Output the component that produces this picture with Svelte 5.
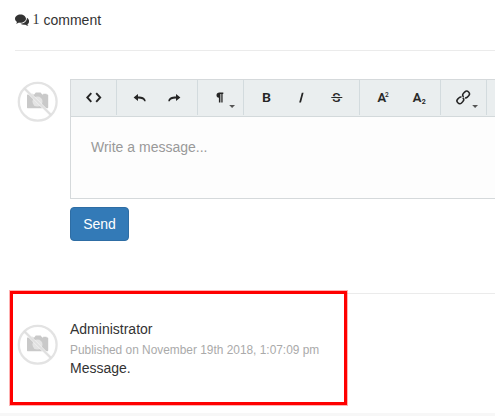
<script>
  const groups = [['code'], ['undo', 'redo'], ['paragraph'], ['bold', 'italic', 'strike'], ['sup', 'sub'], ['link'], ['more']];
</script>

{#snippet avatar()}
  <svg class="avatar" width="45" height="45" viewBox="0 0 45 45">
    <path fill="#c9c9c9" d="M12.300 15.500h2v-.8h3.400v.8h1.500l1.600-2h4.800l1.600 2h1v-.8h3.400v.8h1q.6 0 .6.600V28.600q0 .6-.6.600H12.600q-.6 0-.6-.6V16z" />
    <circle cx="22.500" cy="22.600" r="5" fill="#e4e4e4" />
    <path stroke="#f6f6f6" stroke-width="3" d="M9.500 9.500L36 36" />
    <circle cx="22.700" cy="22.700" r="18.900" fill="none" stroke="#e3e3e3" stroke-width="2.300" />
    <path stroke="#dfdfdf" stroke-width="1.900" d="M9 9L36 36" />
  </svg>
{/snippet}

{#snippet icon(name)}
  <svg class="icon" width="35" height="36" viewBox="0 0 35 36">
    {#if name === 'code'}
      <path class="line" stroke-width="1.900" d="M15.300 13.200L11.300 17.500l4 4.300M20.200 13.200l4 4.300-4 4.300" />
    {:else if name === 'undo'}
      <path d="M11.600 17.500l4.400-3.400v2.500c4.400 0 7.500 1.200 7.700 4.700h-1.500c-.4-2.100-2.500-2.900-6.200-2.900v2.500z" />
    {:else if name === 'redo'}
      <path d="M23.400 17.500L19 14.100v2.500c-4.400 0-7.500 1.200-7.700 4.700h1.500c.4-2.100 2.500-2.900 6.200-2.900v2.500z" />
    {:else if name === 'paragraph'}
      <path d="M20.300 12.500v1.400h-.7v8.600h-1.300v-8.600h-.9v8.600h-1.500v-4.700c-1.600-.3-2.400-1.300-2.400-2.600 0-1.700 1.200-2.700 2.900-2.700z" />
    {:else if name === 'bold'}
      <text x="13" y="22.300" font-size="13.500" font-weight="600" textLength="9" lengthAdjust="spacingAndGlyphs">B</text>
    {:else if name === 'italic'}
      <path d="M17.800 12.700h1.800l-2.600 9.700h-1.800z" />
    {:else if name === 'strike'}
      <text x="13.300" y="22.200" font-size="13.500" font-weight="500">S</text>
      <path fill="#eaeeef" d="M12.300 16.300h11v2.400h-11z" />
      <path d="M12.300 17h11v1h-11z" />
    {:else if name === 'sup'}
      <text x="12.600" y="22.300" font-size="13.500" font-weight="500" stroke="#252525" stroke-width=".2" textLength="8.600" lengthAdjust="spacingAndGlyphs">A</text>
      <text x="20" y="16.800" font-size="6.500" font-weight="500">2</text>
    {:else if name === 'sub'}
      <text x="12.800" y="22.300" font-size="13.500" font-weight="500" stroke="#252525" stroke-width=".2" textLength="8.600" lengthAdjust="spacingAndGlyphs">A</text>
      <text x="21.800" y="23.600" font-size="7" font-weight="700">2</text>
    {:else if name === 'link'}
      <g class="line" stroke-width="1.500" transform="rotate(-45 17.200 17.400)">
        <path d="M16.300 15.900q-.7-1.200-2.200-1.200h-2q-2.500 0-2.500 2.700t2.500 2.700h2q2.600 0 2.600-2.700" />
        <path d="M18.100 18.900q.7 1.200 2.200 1.200h2q2.500 0 2.500-2.700t-2.500-2.700h-2q-2.600 0-2.600 2.700" />
      </g>
    {/if}
    {#if name === 'paragraph' || name === 'link'}
      <path fill="#555" d="M26.200 25h5.800l-2.900 2.900z" />
    {/if}
  </svg>
{/snippet}

<main>
  <header>
    <svg class="chat" width="14" height="14" viewBox="0 0 14 14">
      <path d="M5.500 1.500C2.500 1.500 0 3.400 0 5.800c0 1.300.8 2.400 2 3.200-.2.700-.6 1.200-1.100 1.700 1.200 0 2.200-.5 3-1.100.5.100 1 .2 1.600.2 3 0 5.500-1.700 5.500-4S8.500 1.500 5.500 1.500z" />
      <path d="M11.900 4.700c.2 3.500-2.700 5.800-6.400 6 .9.700 2.100 1.100 3.500 1.100.5 0 .9 0 1.300-.1.900.6 1.900 1.100 3.100 1.100-.4-.5-.8-1-1-1.600 1-.7 1.700-1.600 1.700-2.800 0-1.600-.8-2.900-2.200-3.700z" />
    </svg><span class="count">1</span><span>comment</span>
  </header>

  <section class="compose">
    {@render avatar()}
    <div class="form">
      <div class="editor">
        <div class="toolbar">
          {#each groups as group}
            <div class="group">
              {#each group as name}{@render icon(name)}{/each}
            </div>
          {/each}
        </div>
        <div class="input">Write a message...</div>
      </div>
      <button>Send</button>
    </div>
  </section>

  <article>
    {@render avatar()}
    <div class="body">
      <div>Administrator</div>
      <div class="date">Published on November 19th 2018, 1:07:09 pm</div>
      <div class="message">Message.</div>
    </div>
  </article>
  <footer></footer>
  <div class="highlight"></div>
</main>

<style>
  :global(body) { background: #fff; }
  main {
    position: relative;
    box-sizing: border-box;
    height: 416px;
    overflow: hidden;
    padding-left: 15px;
    display: flex;
    flex-direction: column;
    font: 14px/20px "Liberation Sans", Arial, sans-serif;
    color: #333;
  }
  header {
    box-sizing: border-box;
    flex: none;
    height: 51px;
    padding-top: 10px;
    display: flex;
    border-bottom: 1px solid #ebebeb;
  }
  .chat { margin-top: 3px; fill: #333; }
  .count { margin: 0 4px 0 3.500px; font-family: "Liberation Serif", serif; }
  .compose {
    box-sizing: border-box;
    flex: none;
    height: 243px;
    padding-top: 28px;
    display: flex;
    border-bottom: 1px solid #ebebeb;
  }
  .avatar { flex: none; margin-right: 10px; }
  .form { flex: none; width: 500px; }
  .editor {
    box-sizing: border-box;
    height: 120px;
    border: 1px solid #d5d9db;
    background: #fdfdfd;
  }
  .toolbar {
    box-sizing: border-box;
    height: 37px;
    display: flex;
    overflow: hidden;
    background: #eaeeef;
    border-bottom: 1px solid #d3d9db;
  }
  .group {
    box-sizing: border-box;
    flex: none;
    display: flex;
    height: 35px;
    padding: 0 5px;
    border-right: 1px solid #d3dbde;
  }
  .icon { display: block; fill: #252525; font-family: Roboto, sans-serif; }
  .line { fill: none; stroke: #252525; }
  .input { padding: 20px; color: #999; }
  button {
    box-sizing: border-box;
    display: block;
    width: 59px;
    height: 34px;
    margin-top: 8px;
    padding: 0;
    border: 1px solid #2e6da4;
    border-radius: 4px;
    background: #337ab7;
    color: #fff;
    font: inherit;
  }
  article {
    box-sizing: border-box;
    flex: none;
    height: 119px;
    padding-top: 28px;
    display: flex;
  }
  .body { margin-top: -3px; }
  .date { font-size: 11.900px; line-height: 20px; color: #aaa; margin-top: 1px; }
  .message { margin-top: -2px; }
  footer { flex: none; height: 3px; margin-left: -15px; background: #f7f7f7; }
  .highlight {
    position: absolute;
    left: 10px;
    top: 291px;
    width: 331px;
    height: 108px;
    border: 3px solid #f00;
    box-shadow: 0 0 0 1px rgba(255, 0, 0, .3);
  }
</style>
